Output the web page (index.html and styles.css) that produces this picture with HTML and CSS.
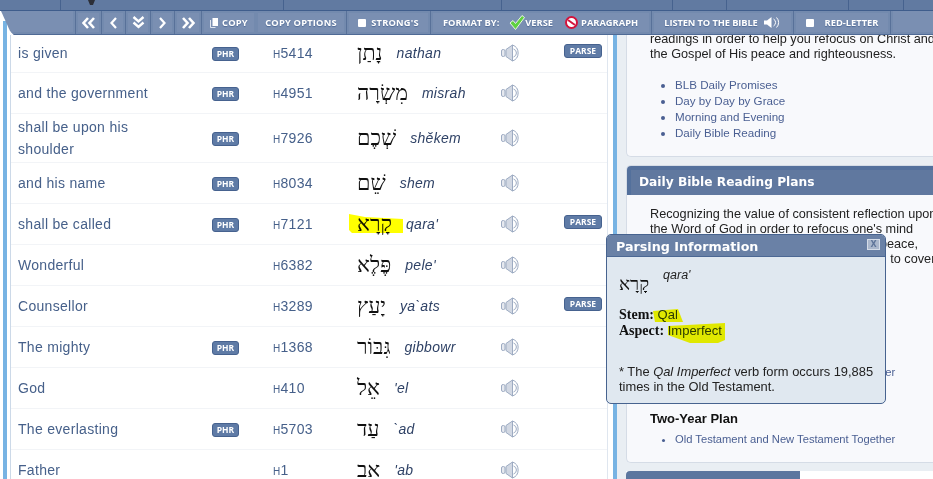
FILE: index.html
```html
<!DOCTYPE html>
<html lang="en">
<head>
    <meta charset="UTF-8">
    <meta name="viewport" content="width=device-width, initial-scale=1.0">
    <title>Interlinear - Blue Letter Bible</title>
    <link rel="stylesheet" href="styles.css">
</head>
<body>
    <svg class="icon-defs" width="0" height="0">
        <symbol id="speaker" viewBox="0 0 22 18">
            <rect x="0.5" y="5.5" width="3.500" height="7" rx="1.500" fill="#e6e9ef" stroke="#9dabc2"/>
            <path d="M5 5.500 L11.500 1 V17 L5 12.500 Z" fill="#d2d8e3" stroke="#9dabc2"/>
            <path d="M11.500 1 A8.500 8.500 0 0 1 11.500 17 M12.500 5 A4.200 4.200 0 0 1 12.500 13" fill="none" stroke="#9dabc2"/>
        </symbol>
    </svg>

    <div class="top-bar">
        <span class="top-cell top-first"></span>
        <span class="top-cell top-second"><svg width="7" height="5" viewBox="0 0 7 5"><path d="M0 0 H7 L5 5 H2 Z" fill="#2c2f38"/></svg></span>
        <span class="top-cell top-third"></span>
        <span class="top-cell top-fourth"></span>
        <span class="top-cell top-fifth"></span>
        <span class="top-cell top-sixth"></span>
        <span class="top-cell top-seventh"></span>
        <span class="top-cell top-rest"></span>
    </div>

    <div class="toolbar">
        <div class="tool-blank"></div>
        <div class="tool-group">
            <a class="tool-btn nav-wide"><svg width="14" height="12" viewBox="0 0 14 12"><path d="M6 1 L1.500 6 L6 11 M12 1 L7.500 6 L12 11" fill="none" stroke="#fff" stroke-width="2.600"/></svg></a>
            <a class="tool-btn nav-small"><svg width="9" height="12" viewBox="0 0 9 12"><path d="M7 1 L2.500 6 L7 11" fill="none" stroke="#fff" stroke-width="2.200"/></svg></a>
            <a class="tool-btn nav-down"><svg width="13" height="13" viewBox="0 0 13 13"><path d="M1.500 1 L6.500 5.500 L11.500 1 M1.500 6.500 L6.500 11 L11.500 6.500" fill="none" stroke="#fff" stroke-width="2.400"/></svg></a>
            <a class="tool-btn nav-small"><svg width="9" height="12" viewBox="0 0 9 12"><path d="M2 1 L6.500 6 L2 11" fill="none" stroke="#fff" stroke-width="2.200"/></svg></a>
            <a class="tool-btn nav-wide nav-last"><svg width="14" height="12" viewBox="0 0 14 12"><path d="M2 1 L6.500 6 L2 11 M8 1 L12.500 6 L8 11" fill="none" stroke="#fff" stroke-width="2.600"/></svg></a>
        </div>
        <div class="tool-group">
            <a class="tool-btn copy-btn"><svg width="8" height="10" viewBox="0 0 8 10"><rect x="2.500" y="0" width="5.500" height="8" fill="#fff"/><path d="M0.500 2 V9.500 H5.500" fill="none" stroke="#dfe5ef"/></svg>Copy</a>
            <a class="tool-btn options-btn">Copy Options</a>
        </div>
        <div class="tool-group">
            <a class="tool-btn strongs-btn"><span class="check-box"></span>Strong's</a>
        </div>
        <div class="tool-group">
            <div class="tool-btn format-btn">
                <span>Format by:</span>
                <span class="format-opt verse-opt"><svg width="16" height="15" viewBox="0 0 16 15"><path d="M1 8 L4 5.500 L6.500 8.500 L13 0.500 L15.500 2.500 L6.500 14.500 Z" fill="#5fd13f" stroke="#e8f5e0"/></svg>Verse</span>
                <span class="format-opt para-opt"><svg width="13" height="13" viewBox="0 0 13 13"><circle cx="6.500" cy="6.500" r="5.500" fill="#fff" stroke="#d3143c" stroke-width="2"/><path d="M3 4 L10 9" stroke="#d3143c" stroke-width="2"/></svg>Paragraph</span>
            </div>
        </div>
        <div class="tool-group">
            <a class="tool-btn listen-btn">Listen to the Bible
                <svg width="17" height="11" viewBox="0 0 17 11"><path d="M0 3.500 H3 L7.500 0 V11 L3 7.500 H0 Z" fill="#fff"/><path d="M9.500 2 A4 4 0 0 1 9.500 9 M12.500 0.500 A7 7 0 0 1 12.500 10.500" fill="none" stroke="#fff"/></svg>
            </a>
        </div>
        <div class="tool-group">
            <a class="tool-btn red-btn"><span class="check-box"></span>Red-Letter</a>
        </div>
        <div class="tool-end"></div>
    </div>

    <div class="page">
        <div class="left-stripe"></div>
        <div class="word-panel">
            <div class="word-row">
                <a class="word-text">is given</a>
                <span class="cell-phr"><span class="badge">PHR</span></span>
                <a class="strongs"><small>H</small>5414</a>
                <span class="hebrew-cell"><span class="hebrew" lang="he" dir="rtl">נָתַן</span><em class="translit">nathan</em></span>
                <svg class="speaker"><use href="#speaker"/></svg>
                <span class="cell-parse"><span class="badge parse-up">PARSE</span></span>
            </div>
            <div class="word-row">
                <a class="word-text">and the government</a>
                <span class="cell-phr"><span class="badge">PHR</span></span>
                <a class="strongs"><small>H</small>4951</a>
                <span class="hebrew-cell"><span class="hebrew" lang="he" dir="rtl">מִשְׂרָה</span><em class="translit">misrah</em></span>
                <svg class="speaker"><use href="#speaker"/></svg>
                <span class="cell-parse"></span>
            </div>
            <div class="word-row tall-row">
                <a class="word-text">shall be upon his shoulder</a>
                <span class="cell-phr"><span class="badge">PHR</span></span>
                <a class="strongs"><small>H</small>7926</a>
                <span class="hebrew-cell"><span class="hebrew" lang="he" dir="rtl">שְׁכֶם</span><em class="translit">shĕkem</em></span>
                <svg class="speaker"><use href="#speaker"/></svg>
                <span class="cell-parse"></span>
            </div>
            <div class="word-row">
                <a class="word-text">and his name</a>
                <span class="cell-phr"><span class="badge">PHR</span></span>
                <a class="strongs"><small>H</small>8034</a>
                <span class="hebrew-cell"><span class="hebrew" lang="he" dir="rtl">שֵׁם</span><em class="translit">shem</em></span>
                <svg class="speaker"><use href="#speaker"/></svg>
                <span class="cell-parse"></span>
            </div>
            <div class="word-row">
                <a class="word-text">shall be called</a>
                <span class="cell-phr"><span class="badge">PHR</span></span>
                <a class="strongs"><small>H</small>7121</a>
                <span class="hebrew-cell"><span class="hebrew" lang="he" dir="rtl">קָרָא</span><em class="translit">qara'</em></span>
                <svg class="speaker"><use href="#speaker"/></svg>
                <span class="cell-parse"><span class="badge parse-up">PARSE</span></span>
            </div>
            <div class="word-row">
                <a class="word-text">Wonderful</a>
                <span class="cell-phr"></span>
                <a class="strongs"><small>H</small>6382</a>
                <span class="hebrew-cell"><span class="hebrew" lang="he" dir="rtl">פֶּלֶא</span><em class="translit">pele'</em></span>
                <svg class="speaker"><use href="#speaker"/></svg>
                <span class="cell-parse"></span>
            </div>
            <div class="word-row">
                <a class="word-text">Counsellor</a>
                <span class="cell-phr"></span>
                <a class="strongs"><small>H</small>3289</a>
                <span class="hebrew-cell"><span class="hebrew" lang="he" dir="rtl">יָעַץ</span><em class="translit">ya`ats</em></span>
                <svg class="speaker"><use href="#speaker"/></svg>
                <span class="cell-parse"><span class="badge parse-up">PARSE</span></span>
            </div>
            <div class="word-row">
                <a class="word-text">The mighty</a>
                <span class="cell-phr"><span class="badge">PHR</span></span>
                <a class="strongs"><small>H</small>1368</a>
                <span class="hebrew-cell"><span class="hebrew" lang="he" dir="rtl">גִּבּוֹר</span><em class="translit">gibbowr</em></span>
                <svg class="speaker"><use href="#speaker"/></svg>
                <span class="cell-parse"></span>
            </div>
            <div class="word-row">
                <a class="word-text">God</a>
                <span class="cell-phr"></span>
                <a class="strongs"><small>H</small>410</a>
                <span class="hebrew-cell"><span class="hebrew" lang="he" dir="rtl">אֵל</span><em class="translit">'el</em></span>
                <svg class="speaker"><use href="#speaker"/></svg>
                <span class="cell-parse"></span>
            </div>
            <div class="word-row">
                <a class="word-text">The everlasting</a>
                <span class="cell-phr"><span class="badge">PHR</span></span>
                <a class="strongs"><small>H</small>5703</a>
                <span class="hebrew-cell"><span class="hebrew" lang="he" dir="rtl">עַד</span><em class="translit">`ad</em></span>
                <svg class="speaker"><use href="#speaker"/></svg>
                <span class="cell-parse"></span>
            </div>
            <div class="word-row">
                <a class="word-text">Father</a>
                <span class="cell-phr"></span>
                <a class="strongs"><small>H</small>1</a>
                <span class="hebrew-cell"><span class="hebrew" lang="he" dir="rtl">אָב</span><em class="translit">'ab</em></span>
                <svg class="speaker"><use href="#speaker"/></svg>
                <span class="cell-parse"></span>
            </div>
        </div>

        <div class="side-panel">
            <div class="card first-card">
                <p class="card-text">readings in order to help you refocus on Christ and the Gospel of His peace and righteousness.</p>
                <ul class="link-list">
                    <li><a>BLB Daily Promises</a></li>
                    <li><a>Day by Day by Grace</a></li>
                    <li><a>Morning and Evening</a></li>
                    <li><a>Daily Bible Reading</a></li>
                </ul>
            </div>
            <div class="card plans-card">
                <h2 class="card-head"><span>Daily Bible Reading Plans</span></h2>
                <p class="card-text">Recognizing the value of consistent reflection upon<br>the Word of God in order to refocus one's mind<br>and heart upon Christ and His Gospel of peace,<br>we offer the following reading plans, for all to cover</p>
                <ul class="link-list one-year">
                    <li><a>New Testament and Old Testament Together</a></li>
                </ul>
                <h3 class="plan-title">Two-Year Plan</h3>
                <ul class="link-list two-year">
                    <li><a>Old Testament and New Testament Together</a></li>
                </ul>
            </div>
            <div class="card-next"><span></span></div>
        </div>
    </div>

    <div class="parse-popup">
        <div class="popup-head">Parsing Information<span class="popup-close">X</span></div>
        <div class="popup-body">
            <div class="popup-word"><span class="hebrew" lang="he" dir="rtl">קָרָא</span><em>qara'</em></div>
            <div class="popup-line"><b>Stem:</b> Qal</div>
            <div class="popup-line"><b>Aspect:</b> Imperfect</div>
            <p class="popup-note">* The <i>Qal Imperfect</i> verb form occurs 19,885 times in the Old Testament.</p>
        </div>
    </div>

    <svg class="marker" width="933" height="479" viewBox="0 0 933 479">
        <path d="M349 214 L365 217 L403 219 L403 233 L352 233 L349 230 Z"/>
        <path d="M653 311 L678 309 L683 322 L655 322 Z"/>
        <path d="M668 326 L725 323 L725 340 L718 343 L690 343 L668 335 Z"/>
    </svg>
</body>
</html>
```

FILE: styles.css
```css
html, body {
    margin: 0;
    padding: 0;
    height: 479px;
    overflow: hidden;
}
body {
    position: relative;
    font-family: "Liberation Sans", Arial, sans-serif;
    font-size: 14px;
    color: #222;
    background: #fff;
}
a {
    color: inherit;
    text-decoration: none;
}
.icon-defs {
    position: absolute;
}

/* top strip, only the bottom of it shows */
.top-bar {
    display: flex;
    height: 11px;
    background: #617aa1;
    border-bottom: 1px solid #3f5d8c;
    box-sizing: border-box;
}
.top-cell {
    flex: none;
    display: flex;
    border-right: 1px solid #46628e;
    box-sizing: border-box;
}
.top-first { width: 61px; }
.top-second { width: 223px; padding-left: 27px; }
.top-third { width: 218px; }
.top-fourth { width: 171px; }
.top-fifth { width: 54px; }
.top-sixth { width: 122px; }
.top-seventh { width: 55px; }
.top-rest { flex: 1; border-right: 0; }

/* toolbar */
.toolbar {
    position: relative;
    z-index: 2;
    display: flex;
    height: 24px;
    background: #7a8fb2;
    border-bottom: 1px solid #4f6a95;
    box-sizing: border-box;
    clip-path: polygon(1px 0, 100% 0, 100% 100%, 14px 100%, 10px 20px);
}
.tool-blank {
    flex: none;
    width: 76px;
    border-right: 1px solid #587199;
    box-sizing: border-box;
    box-shadow: inset -2px -2px 0 #738aae;
}
.tool-group {
    flex: none;
    display: flex;
    align-items: stretch;
    border-right: 1px solid #587199;
}
.tool-end {
    flex: 1;
    box-shadow: inset 2px -2px 0 #738aae;
}
.tool-btn {
    display: flex;
    align-items: center;
    justify-content: center;
    box-sizing: border-box;
    box-shadow: inset 0 0 0 2px #738aae;
    font-family: "Open Sans", sans-serif;
    font-size: 9.300px;
    font-weight: 700;
    text-transform: uppercase;
    white-space: nowrap;
    color: #fff;
    text-shadow: 0 1px 1px #4f6a95;
    letter-spacing: 0.2px;
}
.nav-wide {
    width: 26px;
    border-right: 1px solid #587199;
}
.nav-small {
    width: 24px;
    border-right: 1px solid #587199;
}
.nav-down {
    width: 25px;
    border-right: 1px solid #587199;
}
.nav-last {
    border-right: 0;
}
.copy-btn {
    width: 54px;
    gap: 4px;
}
.options-btn {
    width: 90px;
}
.strongs-btn {
    width: 83px;
    gap: 5px;
}
.check-box {
    width: 8px;
    height: 8px;
    background: #fff;
    border-radius: 1px;
}
.format-btn {
    justify-content: flex-start;
    width: 220px;
    padding-left: 12px;
    letter-spacing: 0;
}
.format-opt {
    display: flex;
    align-items: center;
}
.verse-opt {
    margin-left: 10px;
}
.para-opt {
    margin-left: 12px;
    gap: 3px;
}
.listen-btn {
    width: 141px;
    gap: 6px;
    letter-spacing: -0.1px;
}
.red-btn {
    width: 96px;
    gap: 11px;
    letter-spacing: 0;
}

/* main area */
.page {
    display: flex;
    height: 444px;
}
.left-stripe {
    width: 4px;
    margin-left: 3px;
    margin-top: -14px;
    background: #77b3e3;
}
.word-panel {
    flex: none;
    width: 596px;
    margin-left: 3px;
    border-left: 1px solid #ccd9e8;
    border-right: 1px solid #dfe6ef;
    background: #fff;
}
.word-row {
    display: grid;
    grid-template-columns: 194px 61px 84px 144px 63px 1fr;
    align-items: center;
    min-height: 40px;
    padding-left: 7px;
    border-bottom: 1px solid #f2f4f7;
    color: #46608a;
}
.word-row:first-child {
    min-height: 35px;
    padding-bottom: 2px;
}
.tall-row {
    min-height: 48px;
}
.word-text {
    max-width: 125px;
    font-size: 14px;
    line-height: 22px;
    letter-spacing: 0.3px;
}
.word-row:nth-child(2) .word-text {
    max-width: none;
}
.strongs {
    font-size: 14px;
    letter-spacing: 0.3px;
}
.strongs small {
    font-size: 10px;
}
.badge {
    display: inline-block;
    box-sizing: border-box;
    height: 14px;
    width: 27px;
    line-height: 12px;
    font-family: "Open Sans", sans-serif;
    font-size: 8.500px;
    font-weight: 700;
    text-align: center;
    color: #fff;
    background: #5f7ba6;
    border: 1px solid #46628f;
    border-radius: 3px;
    vertical-align: middle;
}
.parse-up {
    width: 38px;
    position: relative;
    top: -3px;
}
.hebrew-cell {
    display: flex;
    align-items: center;
    gap: 14px;
}
.hebrew {
    font-family: "Liberation Serif", "DejaVu Serif", serif;
    font-size: 21.500px;
    line-height: 30px;
    color: #111;
}
.translit {
    color: #2f4266;
    letter-spacing: 0.3px;
}
.speaker {
    width: 22px;
    height: 18px;
}

/* side column */
.side-panel {
    flex: 1;
    min-width: 0;
    margin-left: 5px;
    padding-left: 9px;
    border-left: 4px solid #77b3e3;
    background: #e9eef3;
}
.card {
    width: 330px;
    background: #f8f9fc;
    border: 1px solid #d5dce6;
    border-right: 0;
    box-sizing: border-box;
    margin-bottom: 8px;
    overflow: hidden;
}
.first-card {
    height: 122px;
    border-top: 0;
    border-radius: 0 0 0 5px;
}
.plans-card {
    height: 298px;
    border-radius: 5px 0 0 5px;
}
.card-text {
    width: 300px;
    margin: 0 0 0 23px;
    line-height: 15px;
    font-size: 12.700px;
    color: #222;
}
.first-card .card-text {
    margin-top: -3px;
}
.link-list {
    margin: 15px 0 0;
    padding: 0 0 0 48px;
    font-size: 11.600px;
    line-height: 16px;
    color: #4a5f92;
}
.card-head {
    margin: 0;
    height: 29px;
    padding: 4px 0 0 4px;
    box-sizing: border-box;
    background: #53709c;
}
.card-head span {
    display: block;
    height: 25px;
    padding-left: 8px;
    background: #60789f;
    font-family: "DejaVu Sans", sans-serif;
    font-size: 12.200px;
    font-weight: 700;
    line-height: 24px;
    color: #fff;
}
.plans-card .card-text {
    margin-top: 12px;
}
.one-year {
    margin-top: 97px;
    font-size: 11.200px;
}
.plan-title {
    margin: 31px 0 0 23px;
    font-size: 13px;
    line-height: 16px;
    color: #111;
}
.two-year {
    margin-top: 4px;
    font-size: 11.200px;
}
.card-next {
    width: 330px;
    height: 8px;
    background: #fff;
}
.card-next span {
    display: block;
    width: 174px;
    height: 8px;
    border-radius: 4px 0 0 0;
    background: #5b769f;
}

/* popup */
.parse-popup {
    position: absolute;
    left: 606px;
    top: 234px;
    width: 280px;
    height: 170px;
    box-sizing: border-box;
    background: #e0e8f0;
    border: 1px solid #47638f;
    border-radius: 5px;
    overflow: hidden;
}
.popup-head {
    display: flex;
    justify-content: space-between;
    height: 22px;
    box-sizing: border-box;
    padding: 0 0 0 9px;
    background: #6a81a6;
    border-bottom: 1px solid #4c6894;
    font-family: "DejaVu Sans", sans-serif;
    font-size: 12.700px;
    font-weight: 700;
    line-height: 24px;
    color: #fff;
}
.popup-close {
    width: 11px;
    height: 9px;
    margin: 4px 5px 0 0;
    background: #aab7cc;
    border: 1px solid #d4dce8;
    font-size: 8px;
    line-height: 9px;
    text-align: center;
    color: #5f7599;
}
.popup-body {
    padding: 12px 10px 0 12px;
    color: #222;
}
.popup-word {
    display: flex;
    gap: 14px;
    height: 38px;
}
.popup-word .hebrew {
    font-size: 18.500px;
}
.popup-word em {
    font-size: 12.500px;
    margin-top: -1px;
}
.popup-line {
    font-size: 13px;
    line-height: 16px;
    color: #2a3a55;
}
.popup-line b {
    font-family: "Liberation Serif", serif;
    font-size: 14px;
    color: #111;
}
.popup-note {
    margin: 25px 0 0;
    font-size: 12.900px;
    line-height: 15px;
}

/* highlighter marks */
.marker {
    position: absolute;
    left: 0;
    top: 0;
    mix-blend-mode: multiply;
    pointer-events: none;
}
.marker path {
    fill: #ffff00;
}
```
